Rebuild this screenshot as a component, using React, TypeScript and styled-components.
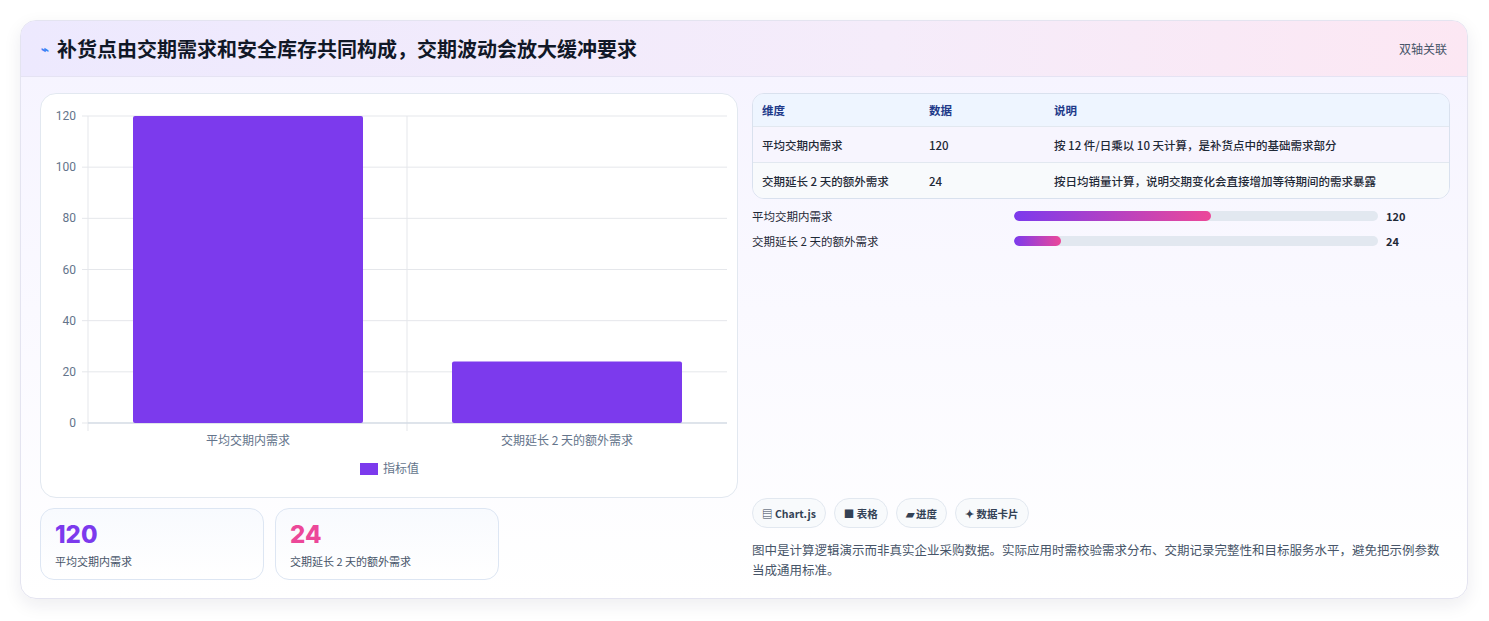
import * as React from 'react';
import styled, { createGlobalStyle } from 'styled-components';

const Global = createGlobalStyle`
  body { margin: 0; background: #f3f3f6; font-family: "Noto Sans CJK SC", "Noto Sans", sans-serif; }
`;

const Page = styled.div`
  padding: 20px 21px 22px 20px;
  background: #ffffff;
`;

const Card = styled.div`
  border: 1px solid #e4e4f0;
  border-radius: 16px;
  background: linear-gradient(180deg, #f5f3ff 0%, #ffffff 100%);
  box-shadow: 0 6px 18px rgba(30, 30, 60, 0.08);
  overflow: hidden;
`;

const Header = styled.div`
  height: 55px;
  display: flex;
  align-items: center;
  justify-content: space-between;
  padding: 0 20px;
  background: linear-gradient(90deg, #ede9fe 0%, #f5ecfa 60%, #fce7f3 100%);
  border-bottom: 1px solid #e5e3f3;
`;

const Title = styled.h1`
  margin: 0;
  font-size: 20px;
  font-weight: 700;
  color: #111827;
  display: flex;
  align-items: center;
  gap: 8px;
`;

const Bolt = styled.span`
  color: #3b82f6;
  font-size: 13px;
`;

const Tag = styled.span`
  font-size: 12px;
  color: #475569;
`;

const Body = styled.div`
  display: grid;
  grid-template-columns: 698px 698px;
  gap: 14px;
  padding: 16px 19px 18px 19px;
`;

const Col = styled.div`
  display: flex;
  flex-direction: column;
`;

const ChartBox = styled.div`
  height: 403px;
  border: 1px solid #e2e8f0;
  border-radius: 16px;
  background: #fff;
`;

const Stats = styled.div`
  display: flex;
  gap: 11px;
  margin-top: 10px;
`;

const Stat = styled.div`
  width: 224px;
  height: 72px;
  box-sizing: border-box;
  border: 1px solid #dde6f3;
  border-radius: 14px;
  background: linear-gradient(180deg, #f8fafe, #ffffff);
  padding: 12px 14px;
`;

const StatNum = styled.div<{ $c: string }>`
  font-family: Inter, sans-serif;
  font-size: 24px;
  font-weight: 800;
  color: ${p => p.$c};
  line-height: 28px;
`;

const StatLabel = styled.div`
  font-size: 11px;
  color: #475569;
  margin-top: 4px;
`;

const Table = styled.div`
  border: 1px solid #d9e1ee;
  border-radius: 12px;
  overflow: hidden;
  font-size: 11.5px;
`;

const Row = styled.div<{ $head?: boolean; $alt?: boolean }>`
  display: grid;
  grid-template-columns: 167px 125px 1fr;
  padding: 0 9px;
  height: ${p => (p.$head ? 32 : 35)}px;
  align-items: center;
  background: ${p => (p.$head ? '#eef5ff' : p.$alt ? '#f8fafc' : '#f7f5fe')};
  color: ${p => (p.$head ? '#1e3a8a' : '#1f2937')};
  font-weight: ${p => (p.$head ? 700 : 500)};
  border-top: ${p => (p.$head ? 'none' : '1px solid #e2e8f0')};
`;

const Bars = styled.div`
  margin-top: 8px;
  display: flex;
  flex-direction: column;
  gap: 8px;
`;

const BarRow = styled.div`
  display: grid;
  grid-template-columns: 262px 364px 1fr;
  gap: 0;
  align-items: center;
  height: 17px;
  font-size: 11.5px;
  color: #1f2937;
`;

const Track = styled.div`
  height: 10px;
  border-radius: 5px;
  background: #e2e8f0;
  overflow: hidden;
`;

const Fill = styled.div`
  height: 100%;
  border-radius: 5px;
  background: linear-gradient(90deg, #7c3aed, #ec4899);
`;

const BarVal = styled.span`
  padding-left: 8px;
  font-weight: 700;
  font-size: 11px;
`;

const Spacer = styled.div`
  flex: 1;
`;

const Chips = styled.div`
  display: flex;
  gap: 8px;
`;

const Chip = styled.span`
  font-size: 10.5px;
  font-weight: 600;
  color: #334155;
  border: 1px solid #e2e8f0;
  background: #f8fafc;
  border-radius: 15px;
  height: 28px;
  padding: 0 9px;
  display: flex;
  align-items: center;
`;

const Note = styled.p`
  margin: 12px 0 0;
  font-size: 12.5px;
  line-height: 20px;
  color: #475569;
`;

const Chart = () => {
  const x0 = 47, x1 = 686, yTop = 22, yBot = 329;
  const ticks = [0, 20, 40, 60, 80, 100, 120];
  const y = (v: number) => yBot - (v / 120) * (yBot - yTop);
  const bars = [
    { v: 120, x: 92, label: '平均交期内需求', cx: 207 },
    { v: 24, x: 411, label: '交期延长 2 天的额外需求', cx: 526 },
  ];
  return (
    <svg width="698" height="403" style={{ display: 'block' }}>
      {ticks.map(t => (
        <g key={t}>
          <line x1={x0 - 6} x2={x1} y1={y(t)} y2={y(t)} stroke="#e5e7eb" />
          <text x={x0 - 12} y={y(t) + 4} textAnchor="end" fontSize="12" fill="#64748b" fontFamily="Roboto, sans-serif">{t}</text>
        </g>
      ))}
      <line x1={x0} x2={x0} y1={yTop} y2={yBot + 8} stroke="#e5e7eb" />
      <line x1={366} x2={366} y1={yTop} y2={yBot + 8} stroke="#e5e7eb" />
      <line x1={x0} x2={x1} y1={yBot} y2={yBot} stroke="#cbd5e1" />
      {bars.map(b => (
        <g key={b.label}>
          <rect x={b.x} y={y(b.v)} width={230} height={yBot - y(b.v)} fill="#7c3aed" rx="2" />
          <text x={b.cx} y={351} textAnchor="middle" fontSize="12" fill="#64748b">{b.label}</text>
        </g>
      ))}
      <rect x={319} y={369} width={18} height={12} fill="#7c3aed" />
      <text x={342} y={379} fontSize="12" fill="#64748b">指标值</text>
    </svg>
  );
};

export default function App() {
  return (
    <Page>
      <Global />
      <Card>
        <Header>
          <Title><Bolt>⌁</Bolt>补货点由交期需求和安全库存共同构成，交期波动会放大缓冲要求</Title>
          <Tag>双轴关联</Tag>
        </Header>
        <Body>
          <Col>
            <ChartBox><Chart /></ChartBox>
            <Stats>
              <Stat><StatNum $c="#7c3aed">120</StatNum><StatLabel>平均交期内需求</StatLabel></Stat>
              <Stat><StatNum $c="#ec4899">24</StatNum><StatLabel>交期延长 2 天的额外需求</StatLabel></Stat>
            </Stats>
          </Col>
          <Col>
            <Table>
              <Row $head><span>维度</span><span>数据</span><span>说明</span></Row>
              <Row><span>平均交期内需求</span><span>120</span><span>按 12 件/日乘以 10 天计算，是补货点中的基础需求部分</span></Row>
              <Row $alt><span>交期延长 2 天的额外需求</span><span>24</span><span>按日均销量计算，说明交期变化会直接增加等待期间的需求暴露</span></Row>
            </Table>
            <Bars>
              <BarRow><span>平均交期内需求</span><Track><Fill style={{ width: '54%' }} /></Track><BarVal>120</BarVal></BarRow>
              <BarRow><span>交期延长 2 天的额外需求</span><Track><Fill style={{ width: '13%' }} /></Track><BarVal>24</BarVal></BarRow>
            </Bars>
            <Spacer />
            <Chips>
              <Chip>▤ Chart.js</Chip>
              <Chip>■ 表格</Chip>
              <Chip>▰ 进度</Chip>
              <Chip>✦ 数据卡片</Chip>
            </Chips>
            <Note>图中是计算逻辑演示而非真实企业采购数据。实际应用时需校验需求分布、交期记录完整性和目标服务水平，避免把示例参数当成通用标准。</Note>
          </Col>
        </Body>
      </Card>
    </Page>
  );
}
